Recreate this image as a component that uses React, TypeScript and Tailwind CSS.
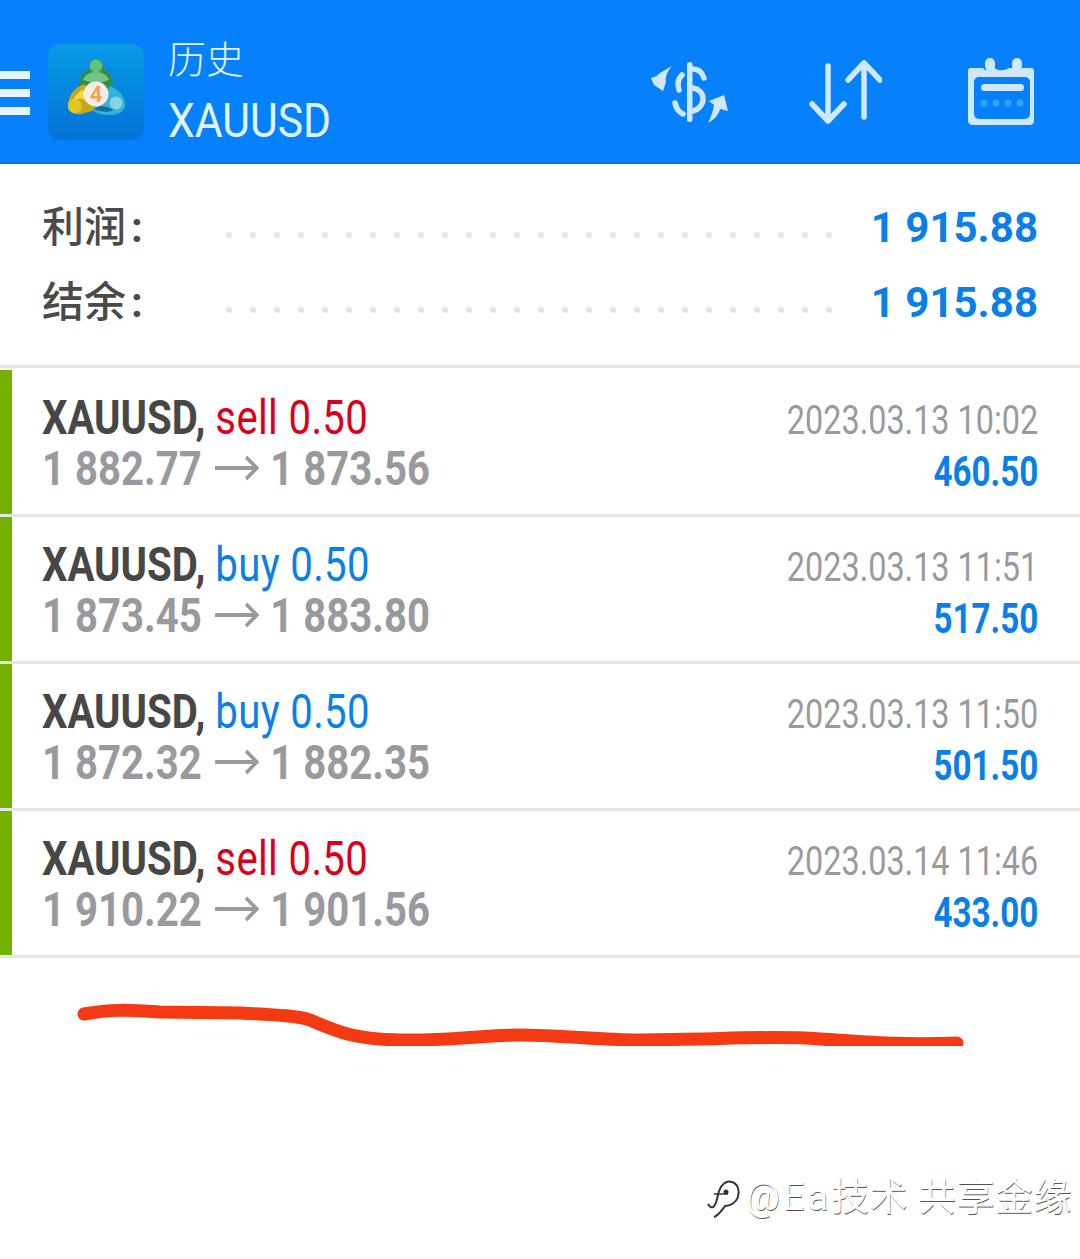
const trades = [
  { side: "sell", a: "1 882.77", b: "1 873.56", date: "2023.03.13 10:02", amount: "460.50" },
  { side: "buy", a: "1 873.45", b: "1 883.80", date: "2023.03.13 11:51", amount: "517.50" },
  { side: "buy", a: "1 872.32", b: "1 882.35", date: "2023.03.13 11:50", amount: "501.50" },
  { side: "sell", a: "1 910.22", b: "1 901.56", date: "2023.03.14 11:46", amount: "433.00" },
];

function Logo() {
  return (
    <div className="w-[96px] h-[96px] rounded-xl bg-gradient-to-b from-[#0a9ae6] to-[#0572d6] shrink-0">
      <svg width="96" height="96" viewBox="0 0 96 96" className="block">
        <path d="M31 42C31 32 36 27 41 25 40 18 44 15 48 15 52 15 56 18 55 25 60 27 65 32 65 42L48 46Z" fill="#2f8c4b" />
        <path d="M35 36C37 31 41 28 48 28 55 28 59 31 61 36L48 40Z" fill="#74c585" />
        <circle cx="48" cy="22" r="6.5" fill="#63bf79" />
        <path d="M36 40C26 44 20 52 20 62 20 68 26 71 33 70L48 66 44 48Z" fill="#c8a814" />
        <path d="M34 46C28 50 25 55 25 57 31 53 36 54 40 58L44 52Z" fill="#f0dc46" />
        <circle cx="27" cy="62" r="7" fill="#e2c722" />
        <path d="M62 42C72 46 78 54 77 62 76 68 70 71 62 71 54 71 48 69 44 66L56 50Z" fill="#35b2da" />
        <path d="M46 65C52 68 60 69 66 66 62 64 56 62 52 62Z" fill="#0f6fa8" />
        <circle cx="68" cy="59" r="6.5" fill="#8bd2e6" />
        <circle cx="48" cy="50" r="12.5" fill="#f6eee6" />
        <text x="48" y="58" textAnchor="middle" fontSize="22" fontWeight="700" fill="#f2a35e" fontFamily="Roboto, sans-serif">4</text>
      </svg>
    </div>
  );
}

function DollarIcon() {
  return (
    <svg width="80" height="64" viewBox="0 0 80 64" fill="none" className="shrink-0">
      <g fill="#cfe8ff">
        <rect x="37" y="2" width="5.5" height="60" rx="2.5" />
        <path d="M22 6C15 10 9 13 7 16L1 18l3 7 9 6 3-9c-1-5 1-10 6-16z" />
        <path d="M58 63c7-4 11-9 12-14l8 2-4-16-15 6 5 4c-1 6-3 12-6 18z" />
      </g>
      <g stroke="#cfe8ff" strokeWidth="5.5" strokeLinecap="round" fill="none">
        <path d="M32 15c-4 4-5 9-3 15" />
        <path d="M43 9c5 0 9 3 11 9" />
        <path d="M25 43c1 5 4 9 8 11" />
        <path d="M43 28c6 1 10 5 10 11 0 6-5 11-10 12" />
      </g>
    </svg>
  );
}

function SortIcon() {
  return (
    <svg width="74" height="64" viewBox="0 0 74 64" fill="none" stroke="#cfe8ff" strokeWidth="5.5" strokeLinecap="round" strokeLinejoin="round" className="shrink-0">
      <path d="M20 6v54M4 44l16 17 16-17" />
      <path d="M56 3v54M40 20 56 3l16 17" />
    </svg>
  );
}

function CalendarIcon() {
  return (
    <svg width="68" height="68" viewBox="0 0 68 68" className="shrink-0">
      <path d="M3 10h12c2 3 6 3 8 0h4c2 3 9 3 14 0h4c2 3 7 3 9 0h9c2 0 3 1 3 3v50c0 2-2 4-4 4H4c-2 0-4-2-4-4V13c0-2 1-3 3-3z" fill="#cfe8ff" />
      <rect x="17" y="0" width="10" height="13" rx="5" fill="#cfe8ff" />
      <rect x="44" y="0" width="10" height="13" rx="5" fill="#cfe8ff" />
      <rect x="6" y="19" width="56" height="42" rx="5" fill="#0780fb" />
      <rect x="13" y="26" width="43" height="7" rx="3.5" fill="#cfe8ff" />
      <g fill="#35a2fb">
        <circle cx="16" cy="45" r="3.5" />
        <circle cx="28" cy="45" r="3.5" />
        <circle cx="40" cy="45" r="3.5" />
        <circle cx="52" cy="45" r="3.5" />
      </g>
    </svg>
  );
}

function SummaryRow({ label, value }: { label: string; value: string }) {
  return (
    <div className="flex items-center h-[75px]">
      <div className="w-[184px] text-[42px] leading-[50px] font-medium text-[#4a4a4a]">
        {label}
        <span className="ml-[5px] font-bold">:</span>
      </div>
      <div className="w-[612px] flex gap-[18px] mt-[14px]">
        {Array.from({ length: 26 }).map((_, i) => (
          <span key={i} className="w-[6px] h-[6px] rounded-full bg-[#e4e4e4]" />
        ))}
      </div>
      <div className="ml-auto text-[42px] leading-[50px] font-bold text-[#0a7fe8]">{value}</div>
    </div>
  );
}

function Arrow() {
  return (
    <svg width="54" height="30" viewBox="0 0 54 30" fill="none" stroke="#9a9a9e" strokeWidth="4" className="inline-block ml-[15px] mr-[13px] -mt-[8px] align-middle">
      <path d="M1 15h50M38 4l13 11-13 11" />
    </svg>
  );
}

function TradeRow({ t }: { t: (typeof trades)[number] }) {
  return (
    <div className="flex h-[147px] border-b-[3px] border-[#e6e6e6]">
      <div className="w-[12px] bg-[#74b000] shrink-0" />
      <div className="flex-1 flex justify-between pl-[30px] pr-[42px] pt-[22px]">
        <div className="origin-left scale-x-[0.836] whitespace-nowrap">
          <div className="text-[48px] leading-[51px]">
            <span className="font-bold text-[#474747]">XAUUSD,</span>{" "}
            <span className={`tracking-[0.4px] ${t.side === "sell" ? "text-[#d9001b]" : "text-[#0a7fe8]"}`}>{t.side} 0.50</span>
          </div>
          <div className="text-[48px] leading-[51px] font-bold text-[#9a9a9e]">
            {t.a}
            <Arrow />
            {t.b}
          </div>
        </div>
        <div className="origin-right scale-x-[0.79] text-right whitespace-nowrap pt-[3px]">
          <div className="text-[41px] leading-[50px] text-[#9a9a9e]">{t.date}</div>
          <div className="text-[42px] leading-[54px] font-bold text-[#0a7fe8]">{t.amount}</div>
        </div>
      </div>
    </div>
  );
}

export default function App() {
  return (
    <div className="w-[1080px] h-[1259px] bg-white overflow-hidden font-['Roboto','Noto_Sans_CJK_SC',sans-serif]">
      <header className="h-[164px] bg-[#0780fb] border-b-[2px] border-[#0a72d8] flex items-center pt-[22px]">
        <div className="w-[30px] flex flex-col gap-[10px] shrink-0 mt-[2px]">
          <span className="h-[8px] bg-[#e6f6ff]" />
          <span className="h-[8px] bg-[#e6f6ff]" />
          <span className="h-[8px] bg-[#e6f6ff]" />
        </div>
        <div className="ml-[18px]"><Logo /></div>
        <div className="ml-[24px] text-[#e0f4ff]">
          <div className="text-[38px] leading-[58px] font-light">历史</div>
          <div className="text-[48px] leading-[64px] origin-left scale-x-[0.89] whitespace-nowrap">XAUUSD</div>
        </div>
        <div className="ml-auto mr-[44px] flex items-center">
          <DollarIcon />
          <div className="ml-[78px]"><SortIcon /></div>
          <div className="ml-[86px]"><CalendarIcon /></div>
        </div>
      </header>
      <section className="px-[42px] h-[204px] pt-[26px] border-b-[3px] border-[#e6e6e6] mb-[2px]">
        <SummaryRow label="利润" value="1 915.88" />
        <SummaryRow label="结余" value="1 915.88" />
      </section>
      <div>
        {trades.map((t) => (
          <TradeRow key={t.date} t={t} />
        ))}
      </div>
      <svg width="1080" height="70" viewBox="0 975 1080 70" fill="none" className="block mt-[18px]">
        <path
          d="M84 1013C110 1008 130 1009 160 1011L240 1012C280 1014 300 1015 310 1019C340 1032 355 1038 400 1039C450 1040 480 1034 520 1034C560 1034 600 1039 640 1039L700 1038C740 1037 780 1035 820 1038C870 1041 900 1044 957 1042"
          stroke="#f33a12"
          strokeWidth="13"
          strokeLinecap="round"
        />
      </svg>
      <div className="flex items-center justify-end pr-[8px] mt-[129px] text-[38px] leading-[44px] text-white [text-shadow:0.5px_0.5px_0.5px_#555]">
        <svg width="36" height="42" viewBox="0 0 36 42" fill="none" stroke="#333" strokeWidth="2" className="mr-[4px]">
          <path d="M2 28c1 2 3 4 5 3 4-2 4-10 6-16 2-6 7-11 13-9 6 2 8 9 6 15-2 6-8 9-13 9-3 4-6 9-11 11" />
          <path d="M8 18h14" strokeWidth="1.5" />
          <circle cx="20" cy="16" r="1.5" fill="#333" />
        </svg>
        <span className="tracking-[0.5px]">
          <span className="tracking-[3px]">@Ea</span>技术 共享金缘
        </span>
      </div>
    </div>
  );
}
